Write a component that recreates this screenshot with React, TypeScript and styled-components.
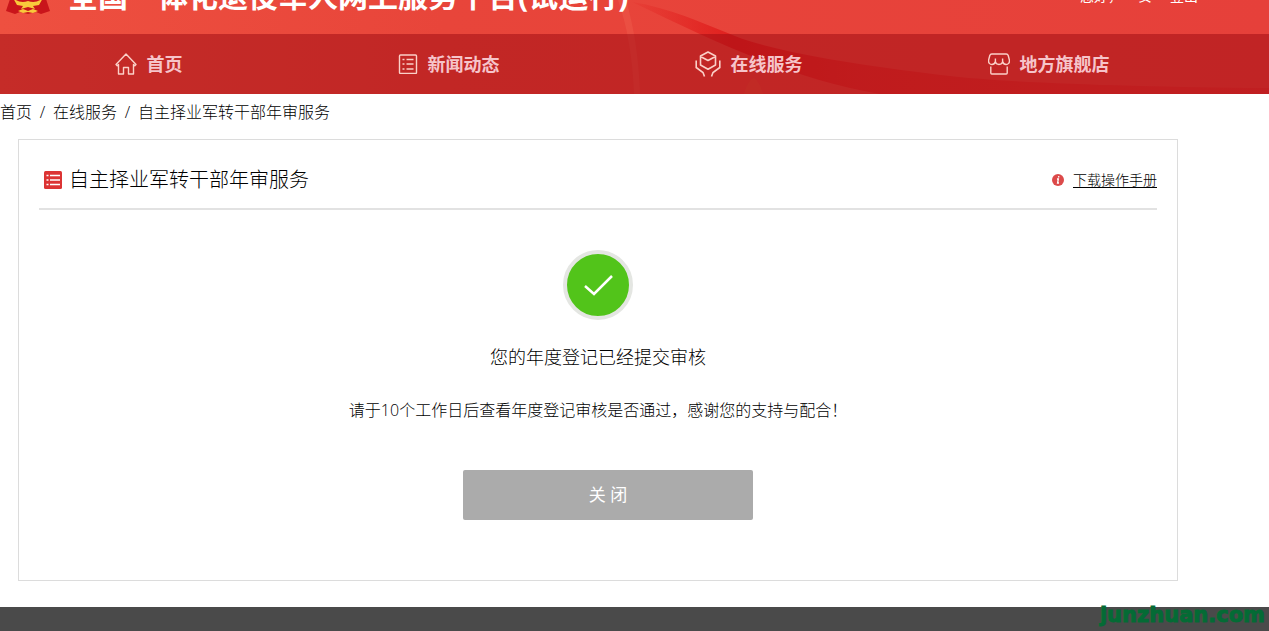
import React from "react";
import styled, { createGlobalStyle } from "styled-components";

const fontStack = `"Open Sans", "Noto Sans CJK SC", sans-serif`;

const GlobalStyle = createGlobalStyle`
  * { box-sizing: border-box; }
  body {
    margin: 0;
    background: #fff;
    color: #000;
    font-family: ${fontStack};
    font-size: 16px;
    font-weight: 300;
  }
  h1, h2, p, ol, ul { margin: 0; padding: 0; list-style: none; }
  a { color: inherit; text-decoration: none; }
`;

const Header = styled.header`
  position: relative;
  overflow: hidden;
  background: linear-gradient(90deg, #ee5040 0%, #e8453a 35%, #e6403a 100%);
`;

const Backdrop = styled.svg`
  position: absolute;
  inset: 0;
  width: 100%;
  height: 100%;
`;

const BrandBar = styled.div`
  position: relative;
  display: flex;
  align-items: flex-end;
  justify-content: space-between;
  max-width: 1200px;
  height: 34px;
  padding: 0 2px 20px 6px;
`;

const Brand = styled.div`
  display: flex;
  align-items: flex-end;
  gap: 18px;
`;

const Emblem = styled.svg`
  flex: none;
  width: 44px;
  height: 48px;
`;

const SiteTitle = styled.h1`
  padding-bottom: 2px;
  color: #fff;
  font-size: 30px;
  line-height: 32px;
  font-weight: 700;
  white-space: nowrap;
`;

const Account = styled.div`
  display: flex;
  gap: 16px;
  padding-bottom: 8px;
  color: #fff;
  font-size: 14px;
  line-height: 20px;
  font-weight: 400;
  white-space: nowrap;
`;

const UserName = styled.span`
  padding-right: 2px;
`;

const NavBand = styled.nav`
  position: relative;
  background: rgba(160, 12, 20, 0.52);
`;

const NavList = styled.ul`
  display: flex;
  max-width: 1200px;
`;

const NavItem = styled.li`
  flex: 1;
`;

const NavLink = styled.a`
  display: flex;
  align-items: center;
  justify-content: center;
  gap: 10px;
  height: 60px;
  padding-right: 3px;
  color: #f6c4ca;
  font-size: 18px;
  line-height: 24px;
  font-weight: 700;
  white-space: nowrap;
`;

const NavIcon = styled.svg<{ $size: number }>`
  flex: none;
  width: ${(p) => p.$size}px;
  height: ${(p) => p.$size}px;
  fill: none;
  stroke: #fbd0c8;
  stroke-width: 1.4;
`;

const Crumbs = styled.ol`
  display: flex;
  gap: 7px;
  padding: 6px 0 15px;
  line-height: 24px;
`;

const Slash = styled.li`
  min-width: 7px;
  text-align: center;
`;

const Main = styled.main`
  max-width: 1196px;
  padding: 0 18px 26px;
`;

const Card = styled.section`
  padding: 20px 20px 60px;
  border: 1px solid #dcdcdc;
`;

const CardHead = styled.div`
  display: flex;
  align-items: center;
  justify-content: space-between;
  height: 50px;
  padding: 0 0 8px 5px;
  border-bottom: 2px solid #e2e2e2;
`;

const CardTitle = styled.h2`
  display: flex;
  align-items: center;
  gap: 7px;
  font-size: 20px;
  line-height: 28px;
  font-weight: 300;

  svg { width: 18px; height: 18px; }
`;

const ManualLink = styled.a`
  display: flex;
  align-items: center;
  gap: 9px;
  font-size: 14px;
  line-height: 20px;

  svg { width: 12px; height: 12px; }
  span { text-decoration: underline; text-underline-offset: 2px; }
`;

const Result = styled.div`
  display: flex;
  flex-direction: column;
  align-items: center;
  padding-top: 40px;
`;

const StatusMark = styled.div`
  display: flex;
  align-items: center;
  justify-content: center;
  width: 70px;
  height: 70px;
  border: 4px solid #e4e6e2;
  border-radius: 50%;
  background: #52c41a;

  svg { width: 30px; height: 24px; }
`;

const Message = styled.p`
  margin-top: 24px;
  font-size: 18px;
  line-height: 26px;
`;

const Hint = styled.p`
  margin-top: 28px;
  line-height: 24px;
`;

const CloseButton = styled.button`
  width: 290px;
  height: 50px;
  margin: 48px 0 0 20px;
  border: 0;
  border-radius: 2px;
  background: #ababab;
  color: #fff;
  font: 400 17px/24px ${fontStack};
`;

const Footer = styled.footer`
  position: relative;
  min-height: 24px;
  background: #4a4a4a;
`;

const Watermark = styled.span`
  position: absolute;
  right: 4px;
  bottom: 4px;
  color: #046b35;
  font: 700 21px/24px "DejaVu Sans", sans-serif;
  -webkit-text-stroke: 1px #046b35;
`;

const HomeIcon = () => (
  <NavIcon $size={22} viewBox="0 0 22 22" aria-hidden="true">
    <path d="M1 11.500 11 1l10 10.500-1.200 1.200-1.300-1.200V21h-5v-6.500h-5V21h-5v-9.500l-1.300 1.200Z" strokeLinejoin="round" />
  </NavIcon>
);

const NewsIcon = () => (
  <NavIcon $size={20} viewBox="0 0 20 20" aria-hidden="true">
    <rect x="1.500" y="1" width="17" height="18.500" rx="1" />
    <path d="M4.500 5.500h2m2 0h7m-11 4.500h2m2 0h7m-11 5h2m2 0h7" />
  </NavIcon>
);

const ServiceIcon = () => (
  <NavIcon $size={26} viewBox="0 0 26 26" aria-hidden="true">
    <path d="M13 1 20.500 5v9L13 18.200 5.500 14V5ZM5.500 5.500 13 9.500l7.500-4" strokeWidth="1.600" strokeLinejoin="round" />
    <path d="M1.200 9.500v7L8 21.500l1.500 4M24.800 9.500v7L18 21.500l-1.500 4" strokeWidth="1.600" />
  </NavIcon>
);

const StoreIcon = () => (
  <NavIcon $size={22} viewBox="0 0 22 22" aria-hidden="true">
    <path d="M3.800 1h14.400q1.500 0 2 1.500l1.200 4.500c.4 3-1.400 4.500-3.300 4.500S15 10 14.600 8.500C14.300 10.500 13 11.500 11 11.500S7.700 10.500 7.400 8.500C7 10 5.800 11.500 3.900 11.500S.200 10 .6 7l1.200-4.500Q2.300 1 3.800 1ZM7.400 9V5.500M14.600 9V5.500" strokeLinejoin="round" />
    <path d="M2.800 13.500V20q0 1 1 1h14.400q1 0 1-1v-6.500" />
  </NavIcon>
);

const navItems = [
  { label: "首页", Icon: HomeIcon },
  { label: "新闻动态", Icon: NewsIcon },
  { label: "在线服务", Icon: ServiceIcon },
  { label: "地方旗舰店", Icon: StoreIcon },
];

export default function App() {
  return (
    <>
      <GlobalStyle />
      <Header>
        <Backdrop viewBox="0 0 1269 94" preserveAspectRatio="none" aria-hidden="true">
          <defs>
            <linearGradient id="ribbon" x1="0" x2="1">
              <stop offset="0" stopColor="#e01818" stopOpacity="0.100" />
              <stop offset="0.160" stopColor="#de1717" stopOpacity="0.800" />
              <stop offset="0.350" stopColor="#df1b19" stopOpacity="0.550" />
              <stop offset="1" stopColor="#df1b19" stopOpacity="0.300" />
            </linearGradient>
          </defs>
          <path
            d="M632 2C670 8 700 22 735 36C780 54 880 68 950 76c60 7 190 11 319 12v6H880C790 78 720 44 632 2Z"
            fill="url(#ribbon)"
          />
          <path d="M618 0q14 40 16 94h6Q638 40 626 0Z" fill="#f2705c" opacity="0.250" />
          <path d="M744 94q4-14 10-16 5 3 9 16Z" fill="#e4553a" opacity="0.600" />
        </Backdrop>
        <BrandBar>
          <Brand>
            <Emblem viewBox="0 0 44 48" aria-hidden="true">
              <circle cx="22" cy="18" r="18" fill="#d61c17" stroke="#f8c83c" strokeWidth="4" />
              <path d="M5 30 0 45l9 3 5-2 8 2 8-2 5 2 9-3-5-15Z" fill="#c9151b" />
              <path d="M7 32q7 6 15 3 8 3 15-3l-4 7-6 1 2 3-7-2-7 2 2-3-6-1Z" fill="#f9c93b" />
              <path d="m12 45 5-2 5 2 5-2 5 2-5 2-5-1-5 1Z" fill="#f9c93b" />
            </Emblem>
            <SiteTitle>全国一体化退役军人网上服务平台(试运行)</SiteTitle>
          </Brand>
          <Account>
            <span>您好，</span>
            <UserName>安</UserName>
            <a href="#logout">登出</a>
          </Account>
        </BrandBar>
        <NavBand>
          <NavList>
            {navItems.map(({ label, Icon }) => (
              <NavItem key={label}>
                <NavLink href="#">
                  <Icon />
                  {label}
                </NavLink>
              </NavItem>
            ))}
          </NavList>
        </NavBand>
      </Header>

      <nav aria-label="breadcrumb">
        <Crumbs>
          <li><a href="#">首页</a></li>
          <Slash>/</Slash>
          <li><a href="#">在线服务</a></li>
          <Slash>/</Slash>
          <li>自主择业军转干部年审服务</li>
        </Crumbs>
      </nav>

      <Main>
        <Card>
          <CardHead>
            <CardTitle>
              <svg viewBox="0 0 18 18" aria-hidden="true">
                <rect width="18" height="18" rx="1.500" fill="#dc3434" />
                <path d="M2.500 4.500h2M6 4.500h10M2.500 9h2M6 9h10M2.500 13.500h2M6 13.500h10" stroke="#fff" strokeWidth="1.300" />
              </svg>
              自主择业军转干部年审服务
            </CardTitle>
            <ManualLink href="#manual">
              <svg viewBox="0 0 12 12" aria-hidden="true">
                <circle cx="6" cy="6" r="6" fill="#dc4a4a" />
                <path d="M6.800 2.200 6.600 3.500M5 5h1.300l-.7 4H7" stroke="#fff" strokeWidth="1.400" fill="none" />
              </svg>
              <span>下载操作手册</span>
            </ManualLink>
          </CardHead>
          <Result>
            <StatusMark>
              <svg viewBox="0 0 30 24" aria-hidden="true">
                <path d="m2 13 9 8L29 3" fill="none" stroke="#fff" strokeWidth="2.500" />
              </svg>
            </StatusMark>
            <Message>您的年度登记已经提交审核</Message>
            <Hint>请于10个工作日后查看年度登记审核是否通过，感谢您的支持与配合！</Hint>
            <CloseButton type="button">关 闭</CloseButton>
          </Result>
        </Card>
      </Main>

      <Footer>
        <Watermark>junzhuan.com</Watermark>
      </Footer>
    </>
  );
}
